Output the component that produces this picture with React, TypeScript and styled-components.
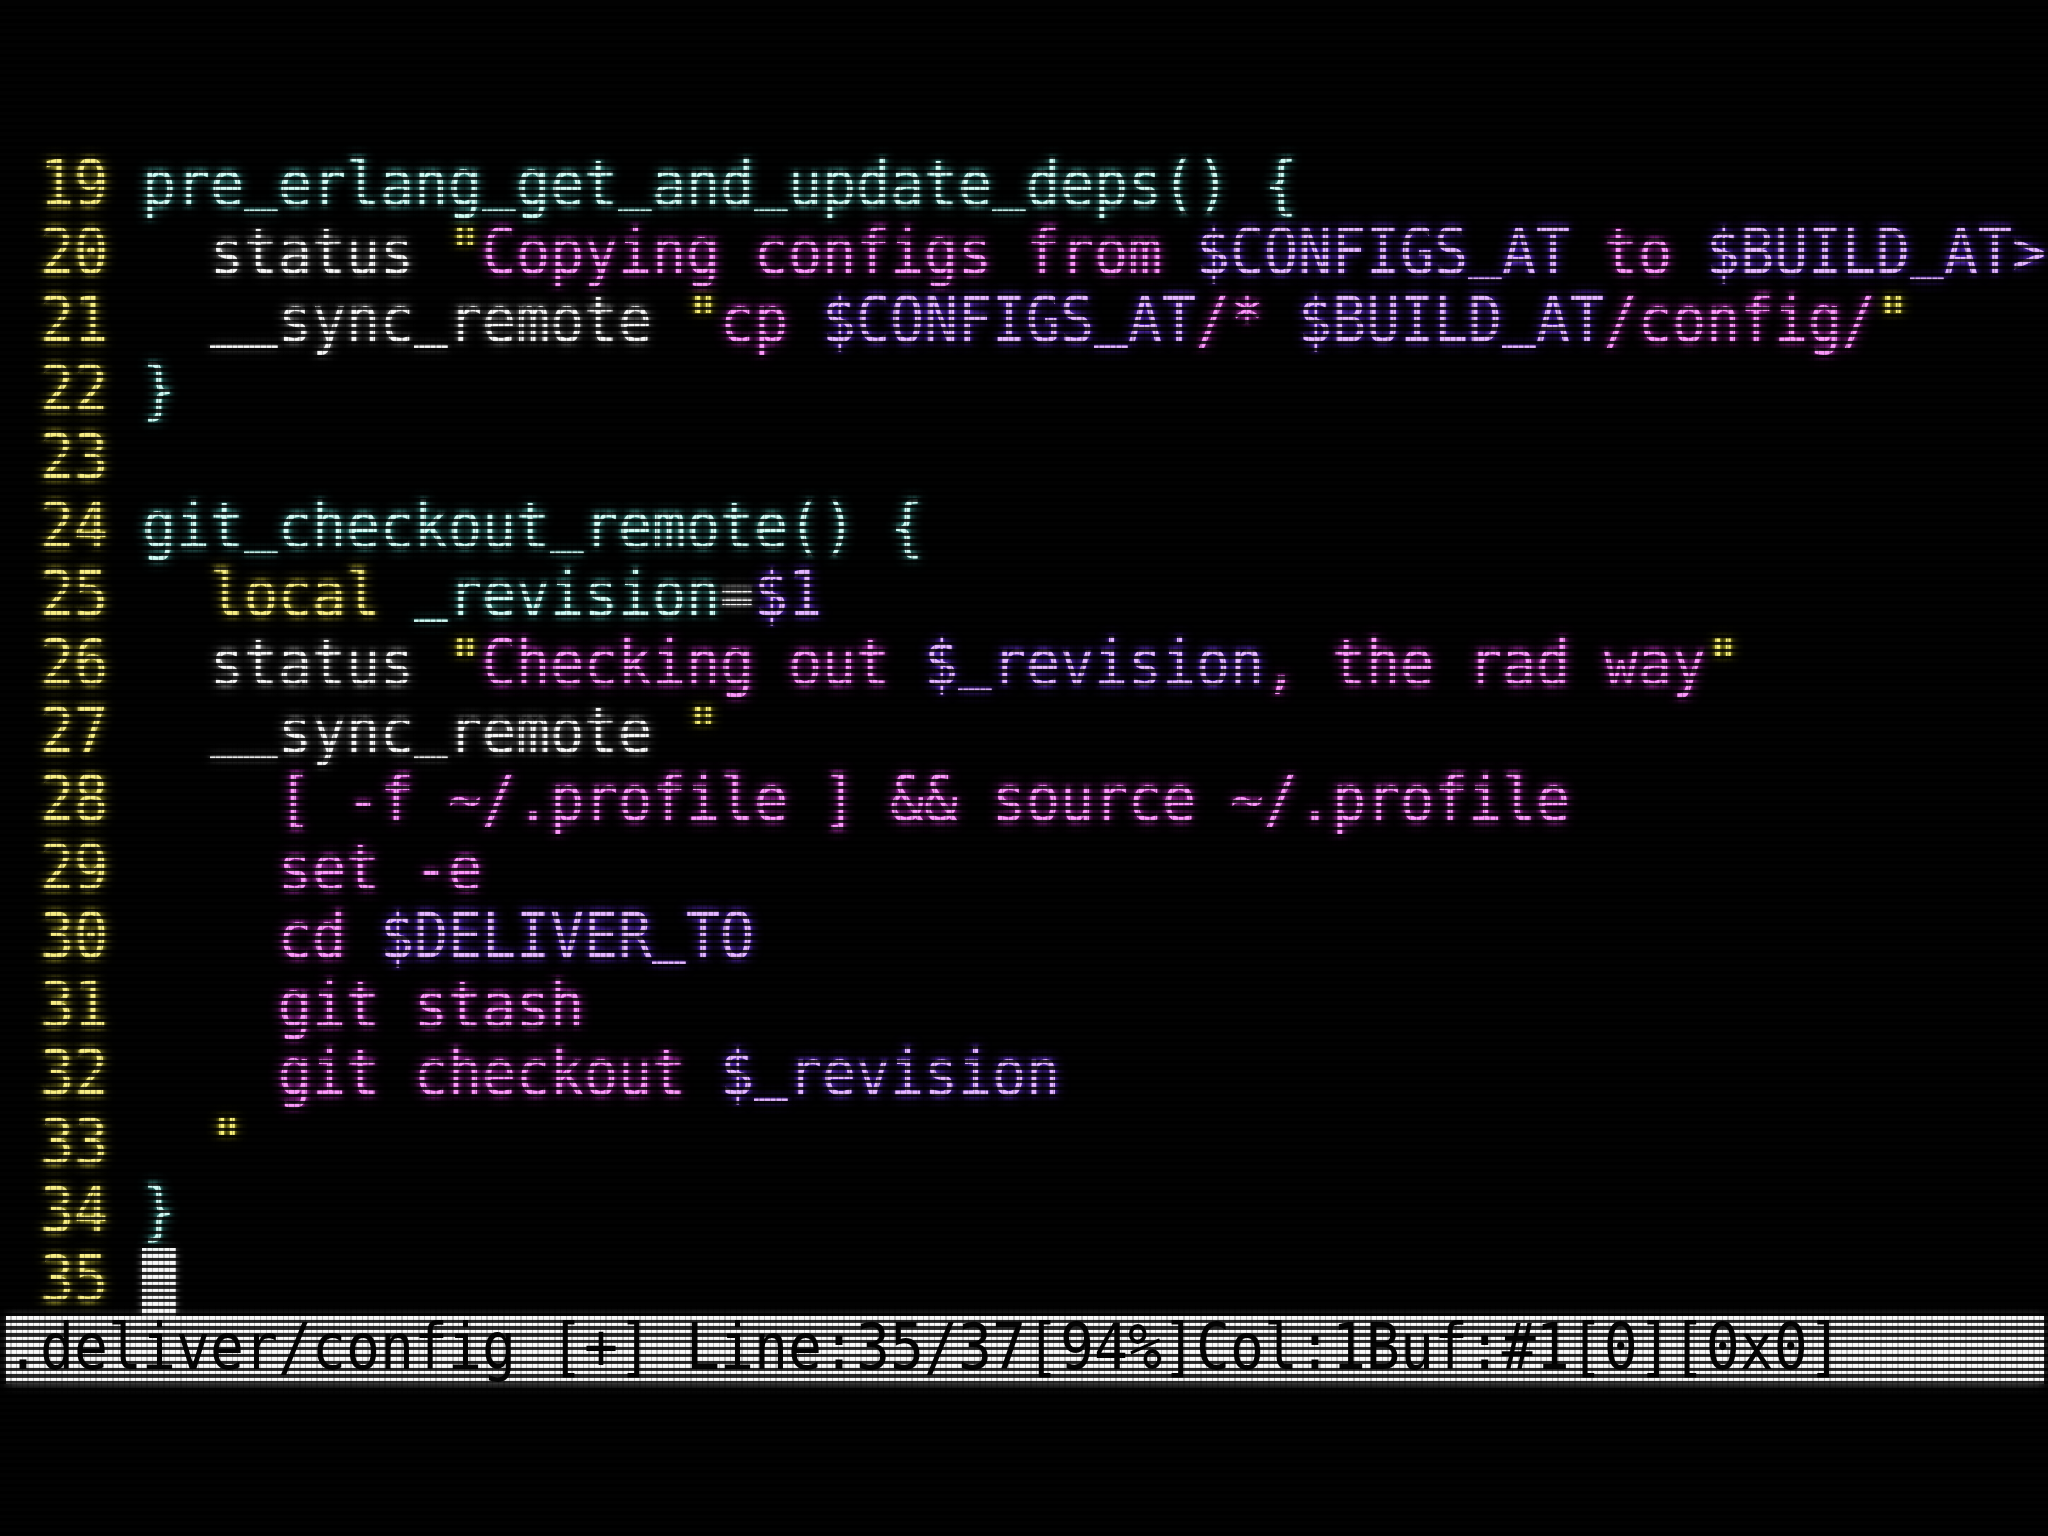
import React from "react";
import styled, { createGlobalStyle } from "styled-components";

const ROW = 68.44;
const CW = 34;

const Global = createGlobalStyle`
  html, body { margin: 0; padding: 0; background: #020202; }
  #root { width: 2048px; height: 1536px; }
`;

type Tone = "num" | "fn" | "plain" | "quote" | "str" | "var" | "kw";

const palette: Record<Tone, { c: string; g: string }> = {
  num: { c: "#f6ec84", g: "rgba(225,215,60,0.8)" },
  fn: { c: "#cdf8f2", g: "rgba(90,210,200,0.8)" },
  plain: { c: "#f4f4f4", g: "rgba(210,210,210,0.65)" },
  quote: { c: "#f8f07a", g: "rgba(225,215,40,0.85)" },
  str: { c: "#fa98f8", g: "rgba(230,60,230,0.85)" },
  var: { c: "#e2b4ff", g: "rgba(120,60,255,0.9)" },
  kw: { c: "#f6ec84", g: "rgba(225,215,60,0.8)" },
};

type Seg = [string, Tone];

const lines: { n: number; segs: Seg[]; cursor?: boolean }[] = [
  { n: 19, segs: [["pre_erlang_get_and_update_deps() {", "fn"]] },
  {
    n: 20,
    segs: [
      ["  status ", "plain"],
      ['"', "quote"],
      ["Copying configs from ", "str"],
      ["$CONFIGS_AT", "var"],
      [" to ", "str"],
      ["$BUILD_AT>", "var"],
    ],
  },
  {
    n: 21,
    segs: [
      ["  __sync_remote ", "plain"],
      ['"', "quote"],
      ["cp ", "str"],
      ["$CONFIGS_AT", "var"],
      ["/* ", "str"],
      ["$BUILD_AT", "var"],
      ["/config/", "str"],
      ['"', "quote"],
    ],
  },
  { n: 22, segs: [["}", "fn"]] },
  { n: 23, segs: [] },
  { n: 24, segs: [["git_checkout_remote() {", "fn"]] },
  {
    n: 25,
    segs: [
      ["  ", "plain"],
      ["local", "kw"],
      [" _revision", "fn"],
      ["=", "plain"],
      ["$1", "var"],
    ],
  },
  {
    n: 26,
    segs: [
      ["  status ", "plain"],
      ['"', "quote"],
      ["Checking out ", "str"],
      ["$_revision", "var"],
      [", the rad way", "str"],
      ['"', "quote"],
    ],
  },
  {
    n: 27,
    segs: [
      ["  __sync_remote ", "plain"],
      ['"', "quote"],
    ],
  },
  { n: 28, segs: [["    [ -f ~/.profile ] && source ~/.profile", "str"]] },
  { n: 29, segs: [["    set -e", "str"]] },
  {
    n: 30,
    segs: [
      ["    cd ", "str"],
      ["$DELIVER_TO", "var"],
    ],
  },
  { n: 31, segs: [["    git stash", "str"]] },
  {
    n: 32,
    segs: [
      ["    git checkout ", "str"],
      ["$_revision", "var"],
    ],
  },
  { n: 33, segs: [["  ", "plain"], ['"', "quote"]] },
  { n: 34, segs: [["}", "fn"]] },
  { n: 35, segs: [], cursor: true },
];

const Screen = styled.div`
  position: relative;
  width: 2048px;
  height: 1536px;
  overflow: hidden;
  background: #020202;
  box-sizing: border-box;
  padding: 152.5px 0 0 6px;
  font-family: "DejaVu Sans Mono", "Liberation Mono", monospace;
  font-size: 56.48px;
`;

const Editor = styled.div`
  display: flex;
  flex-direction: column;
  width: ${CW * 60}px;
`;

const Row = styled.div`
  height: ${ROW}px;
  line-height: ${ROW}px;
  white-space: pre;
  display: flex;
  align-items: stretch;
`;

const Glyphs = styled.span`
  display: inline-block;
  transform: scaleY(1.12);
  transform-origin: 0 54px;
`;

const LineNo = styled.span`
  color: ${palette.num.c};
  text-shadow: 0 0 5px ${palette.num.g}, 0 0 12px ${palette.num.g};
`;

const Piece = styled.span<{ $tone: Tone }>`
  color: ${(p) => palette[p.$tone].c};
  text-shadow: 0 0 5px ${(p) => palette[p.$tone].g},
    0 0 12px ${(p) => palette[p.$tone].g};
`;

const Under = styled.span`
  display: inline-block;
  transform: translateY(-8px);
`;

const Cursor = styled.span`
  display: inline-block;
  width: ${CW}px;
  height: ${ROW}px;
  background: #f6f6f6;
  box-shadow: 0 0 8px rgba(255, 255, 255, 0.5);
`;

const StatusBar = styled.div`
  height: ${ROW}px;
  line-height: ${ROW}px;
  width: ${CW * 60 - 2}px;
  background: #f8f8f8;
  color: #050505;
  white-space: pre;
  box-shadow: 0 0 10px rgba(255, 255, 255, 0.35);
`;

const Scanlines = styled.div`
  position: absolute;
  inset: 0;
  pointer-events: none;
  background-image: repeating-linear-gradient(
    to bottom,
    rgba(0, 0, 0, 0) 0px,
    rgba(0, 0, 0, 0) 3.6px,
    rgba(0, 0, 0, 0.85) 3.6px,
    rgba(0, 0, 0, 0.85) ${ROW / 10}px
  );
  background-position: 0 ${152.5 % (ROW / 10)}px;
`;

const DotMask = styled.div`
  position: absolute;
  inset: 0;
  pointer-events: none;
  background-image: repeating-linear-gradient(
    to right,
    rgba(0, 0, 0, 0) 0px,
    rgba(0, 0, 0, 0) 4.5px,
    rgba(0, 0, 0, 0.22) 4.5px,
    rgba(0, 0, 0, 0.22) ${CW / 6}px
  );
  background-position: 6px 0;
`;

function withUnders(text: string) {
  const parts = text.split("_");
  return parts.map((p, i) => (
    <React.Fragment key={i}>
      {p}
      {i < parts.length - 1 && <Under>_</Under>}
    </React.Fragment>
  ));
}

export default function App() {
  return (
    <>
      <Global />
      <Screen>
        <Editor>
          {lines.map((l) => (
            <Row key={l.n}>
              <Glyphs>
                <LineNo>{` ${l.n} `}</LineNo>
                {l.segs.map((s, i) => (
                  <Piece key={i} $tone={s[1]}>
                    {withUnders(s[0])}
                  </Piece>
                ))}
              </Glyphs>
              {l.cursor && <Cursor />}
            </Row>
          ))}
          <StatusBar>
            <Glyphs>.deliver/config [+] Line:35/37[94%]Col:1Buf:#1[0][0x0]</Glyphs>
          </StatusBar>
        </Editor>
        <DotMask />
        <Scanlines />
      </Screen>
    </>
  );
}
